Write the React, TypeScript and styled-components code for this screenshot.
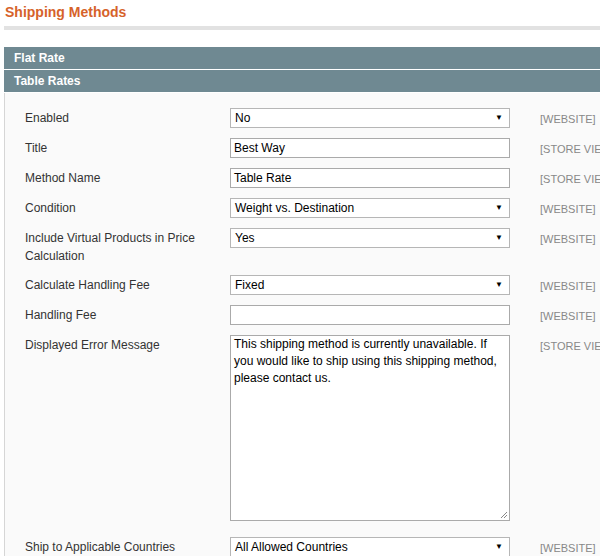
import React from "react";
import styled, { createGlobalStyle } from "styled-components";

const Global = createGlobalStyle`
  body { margin: 0; background: #fff; font-family: Arial, "Liberation Sans", sans-serif; font-size: 12px; color: #2f2f2f; overflow: hidden; }
`;

const Page = styled.div`padding: 3px 0 0 4px;`;
const Title = styled.h3`
  margin: 0 0 0 1px; font-size: 14px; line-height: 18px; color: #d6622a; font-weight: bold;
`;
const Rule = styled.div`height: 4px; background: #e2e2e2; margin: 5px 0 17px 0;`;
const SectionHead = styled.div`
  background: #6f8992; color: #fff; font-weight: bold; font-size: 12px;
  height: 22px; line-height: 22px; padding-left: 10px; margin-bottom: 1px;
`;
const Panel = styled.div`
  background: #fafafa; border-left: 1px solid #d6d6d6; padding: 15px 0 0 15px; height: 600px;
`;
const Row = styled.div<{ $tall?: boolean }>`
  display: grid; grid-template-columns: 210px 280px auto;
  align-items: start; margin-bottom: ${p => (p.$tall ? 16 : 10)}px;
`;
const Label = styled.div`
  padding: 1px 0 0 5px; line-height: 18px; color: #333; width: 190px;
`;
const Scope = styled.div`
  padding: 3px 0 0 30px; font-size: 11px; color: #888; white-space: nowrap; line-height: 16px;
`;
const Input = styled.div`
  height: 20px; box-sizing: border-box; border: 1px solid #aaa; background: #fff;
  padding: 0 3px; line-height: 18px; color: #000; display: flex; align-items: center; justify-content: space-between;
`;
const Select = styled(Input)`padding: 0 6px 0 4px; border-color: #b6b6b6;`;
const Arrow = styled.span`font-size: 8px; color: #000;`;
const Area = styled.div`
  height: 186px; box-sizing: border-box; border: 1px solid #aaa; background: #fff;
  padding: 0 3px; line-height: 17px; color: #000; position: relative;
`;
const Grip = styled.svg`position: absolute; right: 1px; bottom: 1px;`;

const Sel = ({ v }: { v: string }) => (
  <Select>{v}<Arrow>▼</Arrow></Select>
);

export default function App() {
  return (
    <Page>
      <Global />
      <Title>Shipping Methods</Title>
      <Rule />
      <SectionHead>Flat Rate</SectionHead>
      <SectionHead>Table Rates</SectionHead>
      <Panel>
        <Row><Label>Enabled</Label><Sel v="No" /><Scope>[WEBSITE]</Scope></Row>
        <Row><Label>Title</Label><Input>Best Way</Input><Scope>[STORE VIEW]</Scope></Row>
        <Row><Label>Method Name</Label><Input>Table Rate</Input><Scope>[STORE VIEW]</Scope></Row>
        <Row><Label>Condition</Label><Sel v="Weight vs. Destination" /><Scope>[WEBSITE]</Scope></Row>
        <Row><Label>Include Virtual Products in Price Calculation</Label><Sel v="Yes" /><Scope>[WEBSITE]</Scope></Row>
        <Row><Label>Calculate Handling Fee</Label><Sel v="Fixed" /><Scope>[WEBSITE]</Scope></Row>
        <Row><Label>Handling Fee</Label><Input /><Scope>[WEBSITE]</Scope></Row>
        <Row $tall><Label>Displayed Error Message</Label>
          <Area>This shipping method is currently unavailable. If you would like to ship using this shipping method, please contact us.
            <Grip width="8" height="8" viewBox="0 0 8 8"><path d="M7 1L1 7M7 4L4 7" stroke="#888" strokeWidth="1" /></Grip>
          </Area><Scope>[STORE VIEW]</Scope></Row>
        <Row><Label>Ship to Applicable Countries</Label><Sel v="All Allowed Countries" /><Scope>[WEBSITE]</Scope></Row>
      </Panel>
    </Page>
  );
}
